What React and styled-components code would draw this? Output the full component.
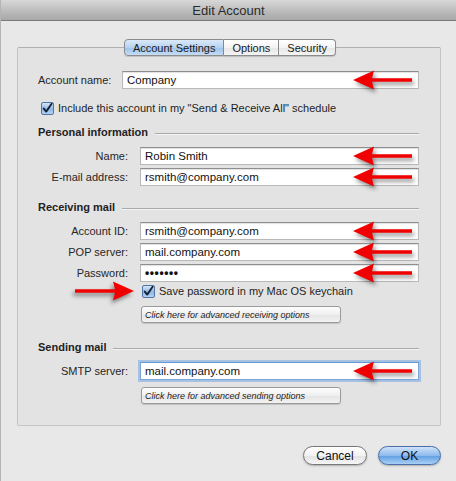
import React from 'react'
import styled, { createGlobalStyle } from 'styled-components';

const GlobalStyle = createGlobalStyle`
    html, body {
        margin: 0;
        padding: 0;
        background: #e8e8e8;
    }
    body {
        font-family: 'Liberation Sans', 'DejaVu Sans', Arial, sans-serif;
        color: #1e1e1e;
    }
`

const Window = styled.div`
    width: 456px;
    height: 481px;
    background: #e8e8e8;
    border-left: 1px solid #b4b4b4;
    box-sizing: border-box;
    overflow: hidden;
`

const TitleBar = styled.div`
    height: 21px;
    background: linear-gradient(#d8d8d8, #b9b9b9 60%, #a8a8a8);
    border-bottom: 1px solid #7a7a7a;
    display: flex;
    align-items: center;
    justify-content: center;
    font-size: 13px;
    color: #2a2a2a;
    box-sizing: border-box;
`

const Body = styled.div`
    padding: 18px 15px 0 16px;
    display: flex;
    flex-direction: column;
`

const TabBar = styled.div`
    display: flex;
    justify-content: center;
    position: relative;
    z-index: 1;
    padding-left: 2px;
`

const Tab = styled.div`
    height: 17px;
    box-sizing: border-box;
    display: flex;
    align-items: center;
    padding: 0 ${p => p.$pad}px;
    font-size: 11px;
    color: #1a1a1a;
    border: 1px solid #8c8c8c;
    border-left: ${p => p.$first ? '1px solid #8c8c8c' : 'none'};
    border-radius: ${p => p.$first ? '4px 0 0 4px' : p.$last ? '0 4px 4px 0' : '0'};
    background: ${p => p.$active
        ? 'linear-gradient(#dbe9f8, #b6d2f0 50%, #9cc2ec 51%, #c4ddf6)'
        : 'linear-gradient(#ffffff, #f3f3f3 50%, #e6e6e6 51%, #f4f4f4)'};
    box-shadow: 0 1px 1px rgba(0,0,0,0.15);
`

const Panel = styled.div`
    margin-top: -9px;
    border: 1px solid #c4c4c4;
    border-top-color: #b0b0b0;
    border-radius: 2px;
    background: #e3e3e3;
    padding: 23px 21px 21px 20px;
    display: flex;
    flex-direction: column;
`

const FieldRow = styled.div`
    display: grid;
    grid-template-columns: ${p => p.$labelWidth}px 1fr;
    column-gap: 12px;
    align-items: center;
    margin-top: ${p => p.$top || 0}px;
`

const Label = styled.div`
    text-align: right;
    font-size: 11px;
    color: #262626;
    white-space: nowrap;
`

const InputWrap = styled.div`
    position: relative;
`

const TextInput = styled.div`
    height: 18px;
    box-sizing: border-box;
    background: #fff;
    border: 1px solid ${p => p.$focused ? '#7ba6da' : '#b8b8b8'};
    border-top-color: ${p => p.$focused ? '#6a98d2' : '#8e8e8e'};
    box-shadow: ${p => p.$focused
        ? '0 0 0 2px rgba(125, 170, 225, 0.6)'
        : 'inset 0 1px 1px rgba(0,0,0,0.12)'};
    padding: 0 4px;
    display: flex;
    align-items: center;
    font-size: 11.5px;
    color: #111;
`

const Dots = styled.span`
    font-size: 12px;
    letter-spacing: 0.6px;
    font-weight: bold;
`

const CheckRow = styled.div`
    position: relative;
    display: flex;
    align-items: center;
    gap: 4px;
    height: 16px;
    margin-top: ${p => p.$top}px;
    margin-left: ${p => p.$indent}px;
    font-size: 11px;
    color: #1e1e1e;
`

const Box = styled.span`
    width: 13px;
    height: 13px;
    box-sizing: border-box;
    border: 1px solid #4f74a6;
    border-radius: 2px;
    background: linear-gradient(#d7e6f7, #8fb6e4 55%, #b7d2f1);
    display: flex;
    align-items: center;
    justify-content: center;
    flex: none;
`

const SectionHeader = styled.div`
    display: flex;
    align-items: center;
    gap: 7px;
    margin-top: ${p => p.$top}px;
    height: 16px;
    font-size: 11px;
    font-weight: bold;
    color: #222;
    white-space: nowrap;
    &::after {
        content: '';
        flex: 1;
        height: 1px;
        margin-top: 3px;
        background: #a9a9a9;
        border-bottom: 1px solid #f4f4f4;
    }
`

const AdvancedBtn = styled.div`
    width: 200px;
    height: 17px;
    box-sizing: border-box;
    margin-top: ${p => p.$top}px;
    margin-left: 103px;
    border: 1px solid #9a9a9a;
    border-radius: 3px;
    background: linear-gradient(#fdfdfd, #efefef 50%, #e4e4e4 51%, #f2f2f2);
    box-shadow: 0 1px 1px rgba(0,0,0,0.15);
    display: flex;
    align-items: center;
    padding-left: 3px;
    font-size: 9px;
    font-style: italic;
    color: #1e1e1e;
`

const Footer = styled.div`
    display: flex;
    justify-content: flex-end;
    gap: 11px;
    margin-top: 20px;
`

const PushButton = styled.div`
    width: ${p => p.$width}px;
    height: 19px;
    box-sizing: border-box;
    border-radius: 10px;
    border: 1px solid ${p => p.$primary ? '#4a6fa8' : '#777'};
    background: ${p => p.$primary
        ? 'linear-gradient(#cfe2f7, #8dbbee 50%, #5f9de3 51%, #a8cff5)'
        : 'linear-gradient(#ffffff, #f2f2f2 50%, #e2e2e2 51%, #f6f6f6)'};
    box-shadow: 0 1px 2px rgba(0,0,0,0.25);
    display: flex;
    align-items: center;
    justify-content: center;
    font-size: 12px;
    color: #111;
`

const ArrowSvg = styled.svg`
    position: absolute;
    top: 50%;
    transform: translateY(-50%) ${p => p.$flip ? 'scaleX(-1)' : ''};
    right: ${p => p.$right != null ? `${p.$right}px` : 'auto'};
    left: ${p => p.$left != null ? `${p.$left}px` : 'auto'};
    overflow: visible;
    filter: drop-shadow(2px 3px 2px rgba(0,0,0,0.45));
    pointer-events: none;
`

function Arrow({ right, left, flip }) {
    return (
        <ArrowSvg width="60" height="20" viewBox="0 0 60 20" $right={right} $left={left} $flip={flip}>
            <path d="M0 10 L21 0.5 L19 8.3 L59 8.3 L59 11.7 L19 11.7 L21 19.5 Z" fill="#f00000" />
        </ArrowSvg>
    )
}

function CheckBox() {
    return (
        <Box>
            <svg width="11" height="11" viewBox="0 0 11 11">
                <path d="M1.8 5.6 L4.2 8.6 L9.6 0.8" fill="none" stroke="#15233a" strokeWidth="1.9" strokeLinecap="round" strokeLinejoin="round" />
            </svg>
        </Box>
    )
}

function Field({ label, labelWidth = 90, top, focused, children, arrow = true }) {
    return (
        <FieldRow $labelWidth={labelWidth} $top={top}>
            <Label>{label}</Label>
            <InputWrap>
                <TextInput $focused={focused}>{children}</TextInput>
                {arrow && <Arrow right={6} />}
            </InputWrap>
        </FieldRow>
    )
}

export default function App() {
    return (
        <>
            <GlobalStyle />
            <Window>
                <TitleBar>Edit Account</TitleBar>
                <Body>
                    <TabBar>
                        <Tab $active $first $pad={8}>Account Settings</Tab>
                        <Tab $pad={8}>Options</Tab>
                        <Tab $last $pad={8}>Security</Tab>
                    </TabBar>
                    <Panel>
                        <Field label="Account name:" labelWidth={72}>Company</Field>
                        <CheckRow $top={11} $indent={3}>
                            <CheckBox />
                            Include this account in my "Send &amp; Receive All" schedule
                        </CheckRow>

                        <SectionHeader $top={8}>Personal information</SectionHeader>
                        <Field label="Name:" top={7}>Robin Smith</Field>
                        <Field label="E-mail address:" top={3}>rsmith@company.com</Field>

                        <SectionHeader $top={13}>Receiving mail</SectionHeader>
                        <Field label="Account ID:" top={7}>rsmith@company.com</Field>
                        <Field label="POP server:" top={3}>mail.company.com</Field>
                        <Field label="Password:" top={3}><Dots>•••••••</Dots></Field>
                        <CheckRow $top={1} $indent={104}>
                            <Arrow left={-68} flip />
                            <CheckBox />
                            Save password in my Mac OS keychain
                        </CheckRow>
                        <AdvancedBtn $top={7}>Click here for advanced receiving options</AdvancedBtn>

                        <SectionHeader $top={16}>Sending mail</SectionHeader>
                        <Field label="SMTP server:" top={7} focused>mail.company.com</Field>
                        <AdvancedBtn $top={7}>Click here for advanced sending options</AdvancedBtn>
                    </Panel>
                    <Footer>
                        <PushButton $width={64}>Cancel</PushButton>
                        <PushButton $width={63} $primary>OK</PushButton>
                    </Footer>
                </Body>
            </Window>
        </>
    )
}
